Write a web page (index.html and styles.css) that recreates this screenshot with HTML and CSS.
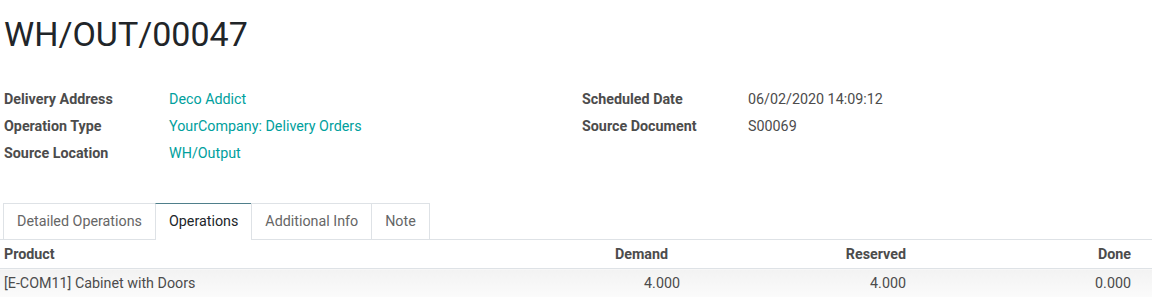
FILE: index.html
```html
<!DOCTYPE html>
<html lang="en">
<head>
    <meta charset="UTF-8">
    <title>WH/OUT/00047</title>
    <link rel="stylesheet" href="styles.css">
</head>
<body>
    <div class="sheet">
        <h1 class="title">WH/OUT/00047</h1>
        <div class="groups">
            <div class="group">
                <div class="field"><span class="label">Delivery Address</span><a href="#">Deco Addict</a></div>
                <div class="field"><span class="label">Operation Type</span><a href="#">YourCompany: Delivery Orders</a></div>
                <div class="field"><span class="label">Source Location</span><a href="#">WH/Output</a></div>
            </div>
            <div class="group">
                <div class="field"><span class="label">Scheduled Date</span><span class="value">06/02/2020 14:09:12</span></div>
                <div class="field"><span class="label">Source Document</span><span class="value">S00069</span></div>
            </div>
        </div>
        <ul class="tabs">
            <li>Detailed Operations</li>
            <li class="active">Operations</li>
            <li>Additional Info</li>
            <li>Note</li>
        </ul>
        <table class="lines">
            <thead>
                <tr>
                    <th class="col-product">Product</th>
                    <th class="num col-demand">Demand</th>
                    <th class="num col-reserved">Reserved</th>
                    <th class="num col-done">Done</th>
                </tr>
            </thead>
            <tbody>
                <tr>
                    <td>[E-COM11] Cabinet with Doors</td>
                    <td class="num">4.000</td>
                    <td class="num">4.000</td>
                    <td class="num">0.000</td>
                </tr>
            </tbody>
        </table>
    </div>
</body>
</html>
```

FILE: styles.css
```css
body {
    margin: 0;
    font-family: Roboto, "Noto Sans", sans-serif;
    font-size: 14.3px;
    color: #4c4c4c;
    background-color: #fff;
}
.sheet {
    padding-top: 10px;
}
.title {
    margin: 0 0 0 4px;
    font-size: 34px;
    font-weight: 400;
    line-height: 48px;
    color: #212529;
}
.groups {
    display: flex;
    margin-top: 28px;
    padding-left: 4px;
}
.group {
    flex: 0 0 578px;
}
.group + .group {
    flex: 1 1 auto;
}
.field {
    display: flex;
    height: 27px;
    line-height: 27px;
}
.label {
    width: 165px;
    flex: none;
    font-weight: 700;
}
.group + .group .label {
    width: 166px;
}
.field a {
    color: #00a09d;
    text-decoration: none;
}
.tabs {
    display: flex;
    list-style: none;
    margin: 36px 0 0;
    padding: 0 0 0 3px;
    border-bottom: 1px solid #dee2e6;
}
.tabs li {
    padding: 0 13px;
    height: 35px;
    line-height: 35px;
    color: #666;
    border: 1px solid #dee2e6;
    border-bottom: none;
    margin-bottom: -1px;
    margin-left: -1px;
    background-color: #fff;
}
.tabs li:first-child {
    margin-left: 0;
}
.tabs li.active {
    color: #212529;
    border-top-color: #4f7f8b;
    height: 36px;
}
.lines {
    width: 100%;
    border-collapse: collapse;
}
.lines th {
    height: 28px;
    padding: 0 4px;
    text-align: left;
    font-weight: 700;
    border-bottom: 1px solid #dee2e6;
}
.lines td {
    height: 28px;
    padding: 0 4px;
    background: linear-gradient(#f2f2f2, #fbfbfb);
}
.lines .num {
    text-align: right;
}
.col-demand {
    width: 300px;
}
.lines th.col-demand {
    padding-right: 16px;
}
.col-reserved {
    width: 218px;
}
.col-done {
    width: 217px;
}
.lines th.col-done,
.lines td:last-child {
    padding-right: 21px;
}
```
